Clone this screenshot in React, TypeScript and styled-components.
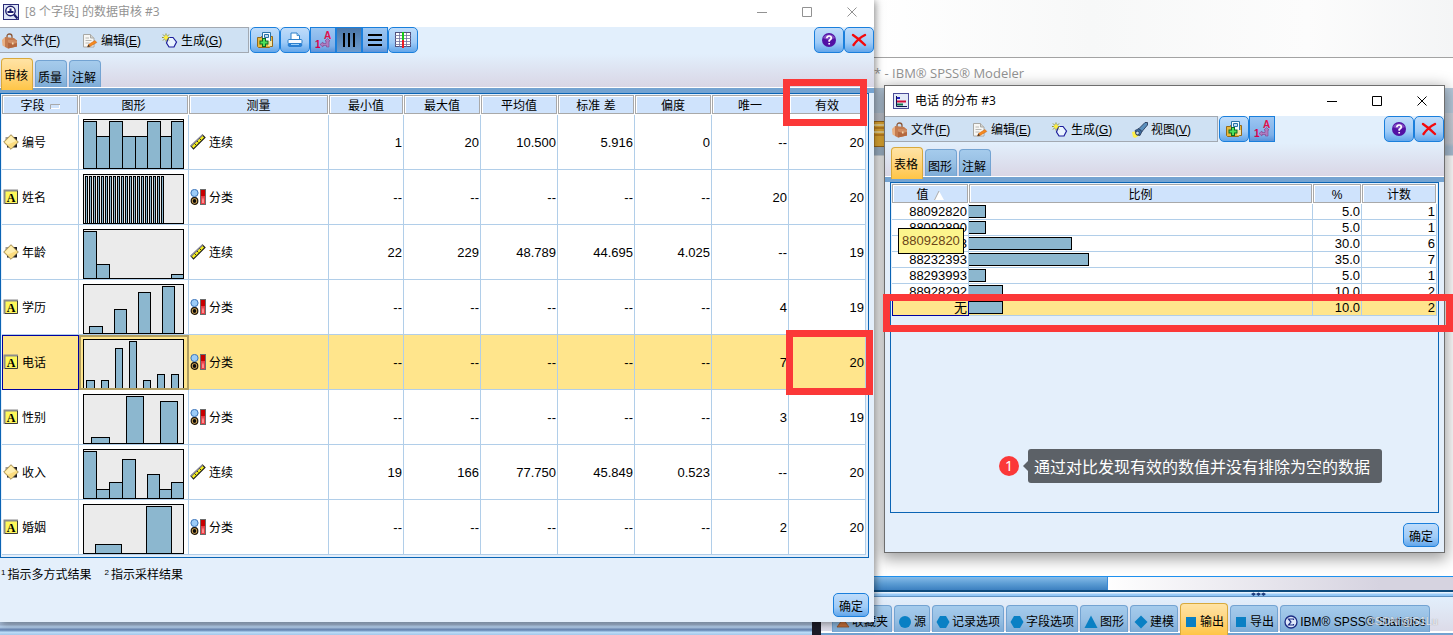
import React from "react";
import styled, { createGlobalStyle, css } from "styled-components";

const Global = createGlobalStyle`
  *, *::before, *::after { box-sizing: border-box; }
  body { margin: 0; background: #fff; }
  button { font: inherit; color: inherit; padding: 0; margin: 0; cursor: default; }
  body, table {
    font-family: "Liberation Sans", "Noto Sans CJK SC", sans-serif;
    font-size: 12px;
    line-height: 16px;
    color: #000;
  }
`;

const SPLIT = "874fr 579fr";
const BAR = "#8cb7cf";

/* ---------- desktop and the application behind ---------- */

const Desktop = styled.main`
  position: relative;
  display: grid;
  grid-template-columns: ${SPLIT};
  align-items: start;
  min-height: 100vh;
  overflow: hidden;
`;
const Backdrop = styled.div`
  position: absolute;
  inset: 0;
  display: flex;
  flex-direction: column;
`;
const Above = styled.div`
  height: 58px;
  background: linear-gradient(90deg, #fff 60%, #f7f8f8 75%, #fcfcfc 90%, #f4f5f6);
  border-bottom: 1px solid #a3a3a3;
`;
const AppTitle = styled.div`
  display: grid;
  grid-template-columns: ${SPLIT};
  height: 30px;
  background: #fff;
  font: 13px/30px "Open Sans", "Noto Sans", sans-serif;
  color: #929292;
`;
const AppMenu = styled.div`
  height: 25px;
  background: #b8cbdd;
`;
const AppTools = styled.div`
  display: grid;
  grid-template-columns: ${SPLIT};
  align-items: center;
  height: 43px;
  background: linear-gradient(#ccd2dc, #c4c9d3 30px, #a9bfd4 34px);
  border-bottom: 1px solid #d5dee6;
`;
const AppCanvas = styled.div`
  flex: 1;
  background: #fff;
`;
const AppScroll = styled.div`
  display: grid;
  grid-template-columns: 1108fr 345fr;
  height: 16px;
  border-top: 1px solid #1e90ee;
  border-bottom: 2px solid #0c4a7c;
  background: linear-gradient(90deg, #fff 76%, #d6d3e0 95%);
`;
const AppThumb = styled.div`
  background: linear-gradient(#86bbe8, #5c9dd4 50%, #3c80c0);
  border-right: 1px solid #3a8ad8;
`;
const Splitter = styled.div`
  display: grid;
  grid-template-columns: 1251fr 202fr;
  height: 5px;
  background: linear-gradient(#e6f2fe 1px, #9ccdf8 2px, #8fc4f4 4px, #5d92c4 4px);
`;
const BottomRow = styled.div`
  display: grid;
  grid-template-columns: 812fr 9px 632fr;
  height: 38px;
`;
const BlurredBar = styled.div`
  background: linear-gradient(#b4cbe6 24px, #a3b7d3 28px, #b8d2ee 29px, #a9c5e4 31px, #6c86b2 32px, #7ba0cb 34px, #bfe0fa 35px, #a4c7ea);
`;
const DarkBlock = styled.div`
  background: #1d1c28;
`;
const Palette = styled.nav`
  display: flex;
  align-items: flex-end;
  gap: 2px;
  height: 38px;
  padding: 0 0 3px 11px;
  background: linear-gradient(#e2effc, #dcdbe8 34px, #fff 34px, #fff 36px, #72a2d0 36px);
`;

const tabFill = css<{ $active?: boolean }>`
  border: 1px solid ${(p) => (p.$active ? "#d8a93c" : "#73a3d2")};
  border-bottom: 0;
  border-radius: 4px 4px 0 0;
  background: ${(p) =>
    p.$active ? "linear-gradient(#ffe3a4, #ffd887 40%, #ffc546)" : "linear-gradient(#a5cbec, #98c0e4 50%, #7dabd6)"};
`;
const PaletteTab = styled.button<{ $active?: boolean }>`
  display: flex;
  align-items: center;
  gap: 2px;
  flex: none;
  height: ${(p) => (p.$active ? 32 : 27)}px;
  margin-bottom: ${(p) => (p.$active ? -3 : 0)}px;
  padding: ${(p) => (p.$active ? 4 : 6)}px 3px 0;
  white-space: nowrap;
  ${tabFill}
`;
const Watermark = styled.span`
  position: absolute;
  right: 15px;
  bottom: 6px;
  font-size: 11px;
  color: #f4f4f8;
  text-shadow: 0 0 1px #666;
  opacity: 0.75;
`;

/* ---------- windows ---------- */

const Win = styled.section<{ $child?: boolean }>`
  position: relative;
  background: #e4effb;
  ${(p) =>
    p.$child
      ? "margin: 85px 8px 0 10px; border: 1px solid #6e6e6e; box-shadow: 0 4px 14px 2px rgba(0,0,0,.38);"
      : "z-index: 1; box-shadow: 1px 1px 8px rgba(0,0,0,.5);"}
`;
const TitleBar = styled.header<{ $child?: boolean }>`
  display: flex;
  align-items: center;
  gap: 6px;
  height: ${(p) => (p.$child ? 30 : 27)}px;
  padding-left: ${(p) => (p.$child ? 8 : 3)}px;
  padding-bottom: ${(p) => (p.$child ? 0 : 4)}px;
  background: #fff;
  font-family: "Open Sans", "Noto Sans CJK SC", sans-serif;
  color: ${(p) => (p.$child ? "#000" : "#929292")};
`;
const Title = styled.h1`
  flex: 1;
  margin: 0;
  font-size: 12px;
  font-weight: 400;
`;
const Caption = styled.div`
  display: flex;
`;
const CaptionButton = styled.button`
  display: grid;
  place-items: center;
  width: 45px;
  height: 22px;
  border: 0;
  background: none;
`;
const Chrome = styled.div`
  display: flex;
  flex-direction: column;
  justify-content: space-between;
  height: 60px;
  background: linear-gradient(#e2effc, #e2effc 45%, #d9d6e5);
`;
const ToolRow = styled.div`
  display: flex;
  height: 26px;
`;
const MenuBar = styled.nav<{ $child?: boolean }>`
  display: flex;
  width: ${(p) => (p.$child ? 333 : 249)}px;
  margin-right: 1px;
  padding-left: ${(p) => (p.$child ? 7 : 2)}px;
  background: #cfe1f3;
  border: solid #a2a9b2;
  border-width: 1px 1px 1px 0;
`;
const MenuButton = styled.button`
  display: flex;
  align-items: center;
  gap: 3px;
  width: 80px;
  padding-top: 2px;
  border: 0;
  background: none;
  white-space: nowrap;
`;
const Push = styled.span`
  flex: 1;
`;
const ToolButton = styled.button<{ $kind?: "flat" | "down" }>`
  display: grid;
  place-items: center;
  width: ${(p) => (p.$kind ? 26 : 30)}px;
  height: 26px;
  border: 1px solid #1a7fdc;
  border-radius: ${(p) => (p.$kind ? 0 : 5)}px;
  background: ${(p) =>
    p.$kind === "down"
      ? "linear-gradient(#4a76a8, #6c9bcd)"
      : p.$kind === "flat"
      ? "linear-gradient(#9cc6f2, #7fb0e8 75%, #5a92d8)"
      : "linear-gradient(#bfdcfa, #9fcbf7 60%, #62a6ea)"};
`;
const TabRow = styled.div<{ $child?: boolean }>`
  position: relative;
  z-index: 1;
  display: flex;
  align-items: flex-end;
  gap: 2px;
  padding-left: ${(p) => (p.$child ? 6 : 1)}px;
`;
const Tab = styled.button<{ $active?: boolean }>`
  width: 32px;
  height: ${(p) => (p.$active ? 32 : 27)}px;
  margin-bottom: ${(p) => (p.$active ? -3 : 0)}px;
  padding: ${(p) => (p.$active ? 2 : 8)}px 2px 0 0;
  ${tabFill}
`;
const Band = styled.div`
  height: 6px;
  border-top: 1px solid #fff;
  background: #74a3d1;
`;
const Frame = styled.div<{ $child?: boolean }>`
  position: relative;
  margin: 0 5px 0 ${(p) => (p.$child ? 5 : 0)}px;
  min-height: ${(p) => (p.$child ? 331 : 465)}px;
  padding: 1px;
  border: 1px solid #0a64b4;
`;
const Notes = styled.p`
  display: flex;
  gap: 13px;
  margin: 0;
  padding: 9px 0 10px 1px;
  sup {
    font-size: 8px;
    line-height: 8px;
    vertical-align: 4px;
    margin-right: 2px;
  }
`;
const Actions = styled.div<{ $child?: boolean }>`
  display: flex;
  justify-content: flex-end;
  padding: ${(p) => (p.$child ? 10 : 0)}px 5px 5px;
`;
const OkButton = styled.button`
  width: 36px;
  height: 24px;
  padding-top: 3px;
  border: 1px solid #1a7fdc;
  border-radius: 5px;
  background: linear-gradient(#bfdcfa, #9fcbf7 60%, #62a6ea);
`;

/* ---------- tables ---------- */

const Table = styled.table<{ $inset?: boolean }>`
  width: ${(p) => (p.$inset ? "calc(100% - 1px)" : "100%")};
  table-layout: fixed;
  border-collapse: separate;
  border-spacing: 0;
`;
const Th = styled.th`
  height: 20px;
  padding: 0 1px 1px 0;
  font-weight: 400;
  background: #fff;
`;
const HeadBox = styled.div`
  display: flex;
  align-items: center;
  justify-content: center;
  gap: 5px;
  height: 19px;
  padding-top: 3px;
  border: 1px solid #a9a9a9;
  box-shadow: inset 1px 1px #fff;
  background: #cfe3fc;
`;
const Row = styled.tr<{ $selected?: boolean; $height: number }>`
  height: ${(p) => p.$height}px;
  background: ${(p) => (p.$selected ? "#ffe58c" : "#fff")};
`;
const Td = styled.td<{ $mark?: "focus" | "graph" }>`
  padding: 0 1px;
  border-right: 1px solid #b1cee9;
  border-bottom: 1px solid #b1cee9;
  text-align: right;
  font-size: 13px;
  line-height: 15px;
  ${(p) => p.$mark === "focus" && "outline: 1px solid #0000a0; outline-offset: -1px;"}
  ${(p) => p.$mark === "graph" && "outline: 2px solid #b09e62; outline-offset: -2px;"}
`;
const Label = styled.div`
  display: flex;
  align-items: center;
  gap: 3px;
  font-size: 12px;
  line-height: 16px;
  span { padding-top: 2px; }
`;
const GraphBox = styled.div`
  display: flex;
  padding: 4px 0 0 3px;
`;
const BarCell = styled(Td)`
  padding: 0;
`;
const Bar = styled.div`
  height: 13px;
  border: 1px solid #000;
  border-left: 0;
  background: ${BAR};
`;

/* ---------- annotations ---------- */

const RedBox = styled.div<{ $top: number; $right: number; $width: string; $height: number }>`
  position: absolute;
  z-index: 3;
  top: ${(p) => p.$top}px;
  right: ${(p) => p.$right}px;
  width: ${(p) => p.$width};
  height: ${(p) => p.$height}px;
  border: 7px solid #fb3838;
  pointer-events: none;
`;
const Tip = styled.div`
  position: absolute;
  z-index: 2;
  top: 142px;
  left: 13px;
  padding: 4px 3px;
  border: 1px solid #000;
  background: #fcf48c;
  color: #6a4418;
  font-size: 13px;
`;
const Callout = styled.div`
  position: absolute;
  top: 363px;
  right: 62px;
  display: flex;
  align-items: center;
  gap: 9px;
  white-space: nowrap;
`;
const Badge = styled.span`
  width: 20px;
  height: 20px;
  border-radius: 50%;
  background: #fb3838;
  color: #fff;
  font: 14px/20px "Noto Sans", sans-serif;
  text-align: center;
`;
const Bubble = styled.span`
  position: relative;
  padding: 0 12px 0 6px;
  border-radius: 3px;
  background: #5c6167;
  color: #fff;
  font: 16px/34px "Noto Sans CJK SC", sans-serif;
  &::before {
    content: "";
    position: absolute;
    left: -5px;
    top: 12px;
    border: 5px solid transparent;
    border-left: 0;
    border-right-color: #5c6167;
  }
`;

/* ---------- icons ---------- */

const Svg = ({ w = 16, h = 16, children }: { w?: number; h?: number; children: React.ReactNode }) => (
  <svg width={w} height={h} viewBox={`0 0 ${w} ${h}`} aria-hidden="true">
    {children}
  </svg>
);

const AuditIcon = () => (
  <Svg>
    <rect x=".5" y=".5" width="15" height="15" fill="#dfe6f6" stroke="#2c2c78" />
    <circle cx="7.500" cy="7" r="4.700" fill="#fff" stroke="#1c1c6c" strokeWidth="1.400" />
    <path d="M11 10.500l3.500 4" stroke="#1c1c6c" strokeWidth="2.200" />
    <path d="M4.500 9V7h2V4.500h2V7h2v2z" fill="#1c1c6c" />
  </Svg>
);
const DistIcon = () => (
  <Svg>
    <rect x=".5" y=".5" width="15" height="15" fill="#e3eaf8" stroke="#4c4c98" />
    <path d="M3.500 3v10.500H14" stroke="#101050" fill="none" />
    <path d="M4 5h3" stroke="#2424c0" strokeWidth="2" />
    <path d="M4 8.500h9" stroke="#d40c38" strokeWidth="2" />
    <path d="M4 11.500h6" stroke="#10704c" strokeWidth="2" />
  </Svg>
);
const BagIcon = () => (
  <Svg>
    <path d="M5 6V3.500Q5 1 7.500 1T10 3.500V5" fill="none" stroke="#8c5a3c" strokeWidth="1.300" />
    <path d="M0 7l3-3v10l-2.500-1.500z" fill="#e9b184" />
    <path d="M3 4l9 1 3 2.500v6l-9 2-3-1.500z" fill="#c47c50" />
    <path d="M6 6.500l9 1v6l-9 2z" fill="#b4683f" />
    <path d="M6 6.500l9 1v2.500l-4.500 1L6 9.500z" fill="#d08e64" />
    <path d="M10 9.500h1.500v2H10z" fill="#f4d9b0" />
  </Svg>
);
const EditIcon = () => (
  <Svg>
    <path d="M1.500 1.500h7l3.500 3.500v9h-10.500z" fill="#f7f7f5" stroke="#a8a8a4" />
    <path d="M8.500 1.500V5H12" fill="#d4d4d0" stroke="#a8a8a4" />
    <path d="M3.500 5h3.500M3.500 7.500h6M3.500 10h4" stroke="#b8b8b4" />
    <path d="M6.500 11.500L13 7.500l1.800 2-6.800 4-2.500.5z" fill="#f58a1e" stroke="#c45c10" strokeWidth=".5" />
    <path d="M5.500 14l1-2.500 1.500 2z" fill="#333" />
  </Svg>
);
const GenIcon = () => (
  <Svg>
    <path d="M6.500 4.500H11L14.500 9l-2.500 5H7L4.500 10z" fill="#e9f4ff" stroke="#1c1c9c" strokeWidth="1.200" />
    <path d="M0 4.500h8M4 .5v8M1 1.500l6 6M7 1.500l-6 6" stroke="#8a8a1c" strokeWidth=".9" />
    <path d="M4 2L6.500 4.500 4 7 1.500 4.500z" fill="#ffef3c" />
  </Svg>
);
const TorchIcon = () => (
  <Svg>
    <path d="M0 10l5-1 3 4-5 3-2-1z" fill="#fff04a" />
    <path d="M3 8.500l4-2 3 3-2 4-3.500-.5z" fill="#3d6c9c" stroke="#1c2c4c" strokeWidth=".7" />
    <path d="M7 6.500L13 .5h2.500V3L10 9.500z" fill="#5a8fbc" stroke="#1c2c4c" strokeWidth=".8" />
    <circle cx="5.500" cy="11" r="1.800" fill="#c8dcf0" stroke="#1c2c4c" strokeWidth=".7" />
  </Svg>
);
const AddPageIcon = () => (
  <Svg>
    <path d="M.5 5.500h4v-1h11v10h-2l-1 1H1.500l-1-1z" fill="#e6b83e" stroke="#94691c" />
    <path d="M5.500 .5h8v9h-8z" fill="#f5fbff" stroke="#2a72a8" />
    <path d="M7.500 2.500h4v3h-4z" fill="#bfdcf0" stroke="#2a72a8" />
    <path d="M11 9h4v5h-4z" fill="#f4e4a4" />
    <path d="M2.500 10.500h9M7 6v9" stroke="#0d6820" strokeWidth="4" />
    <path d="M3.500 10.500h7M7 7v7" stroke="#4ce05a" strokeWidth="2" />
  </Svg>
);
const PrintIcon = () => (
  <Svg>
    <path d="M4 8V1h6l2.500 2.500V8z" fill="#fff" stroke="#2f80c8" />
    <path d="M10 1v2.500h2.500" fill="#bcdcf6" stroke="#2f80c8" strokeWidth=".8" />
    <rect x="1" y="7.500" width="14" height="4" rx="1" fill="#f6faff" stroke="#2f80c8" />
    <path d="M.8 11.500h14.400v2L14 15H2L.8 13.500z" fill="#2a80d4" />
    <path d="M4 12.500h8" stroke="#9cd0fa" />
  </Svg>
);
const OneAIcon = () => (
  <Svg w={18} h={18}>
    <text x="1" y="17" fontFamily="Liberation Sans" fontWeight="700" fontSize="10" fill="#d8004c">1</text>
    <text x="10" y="8" fontFamily="Liberation Sans" fontWeight="700" fontSize="10" fill="#e0104c">A</text>
    <path d="M6 13.500L9 11v1.500h3V10h-1l2.500-2.500L16 10h-1v6h-2.500v-1.500H9V16z" fill="#b07cc0" stroke="#84408c" strokeWidth=".6" />
  </Svg>
);
const ColsIcon = () => (
  <Svg>
    <path d="M3 1v14M8 1v14M13 1v14" stroke="#000" strokeWidth="2" />
  </Svg>
);
const RowsIcon = () => (
  <Svg>
    <path d="M1 3h14M1 8h14M1 13h14" stroke="#000" strokeWidth="2" />
  </Svg>
);
const GridIcon = () => (
  <Svg w={18} h={18}>
    <rect x="1.500" y="1.500" width="15" height="14" fill="#fff" stroke="#50507c" />
    <path d="M1 4.500h16M1 7.500h16M1 10.500h16M1 13.500h16M5.500 2v14M12.500 2v14" stroke="#70709c" strokeWidth=".8" />
    <rect x="8" y="1" width="2" height="8" fill="#18c818" />
    <rect x="8" y="9" width="2" height="8" fill="#ec1c24" />
  </Svg>
);
const HelpIcon = () => (
  <Svg>
    <circle cx="8" cy="8" r="7" fill="#5210a4" />
    <path d="M2 6a6.500 5.500 0 0 1 12 0q-6 3-12 0z" fill="#9468d0" opacity=".7" />
    <path d="M5.800 6.300Q6 4 8.100 4t2.200 2Q10.300 7.200 8.200 8.500v1.200M8.200 11v1.600" fill="none" stroke="#fff" strokeWidth="1.700" />
  </Svg>
);
const CloseIcon = () => (
  <Svg>
    <path d="M2 3Q8 7 14 13M14 3Q7 6.500 2.500 13" stroke="#f4080c" strokeWidth="2.400" fill="none" strokeLinecap="round" />
  </Svg>
);
const DiamondIcon = () => (
  <Svg>
    <path d="M2.500 3h4v4h-4z" fill="#9c9c9c" />
    <path d="M10 3h4v4h-4zM10 10h4v3.500h-4zM4 10h3v3.500H4z" fill="#1c1c24" />
    <path d="M8 .7L15.300 8 8 15.300.7 8z" fill="#fbdc80" stroke="#a08c54" />
    <path d="M8 2L13 7 5 10.500 2 8z" fill="#fff0b4" />
  </Svg>
);
const LetterIcon = () => (
  <Svg>
    <path d="M1 1h14v14H1z" fill="#fff85a" />
    <path d="M1.500 15V1.500H15" fill="none" stroke="#8c8c8c" strokeWidth="2" />
    <path d="M14.500 2v12.500H2" fill="none" stroke="#3c3c3c" />
    <text x="8.200" y="12.500" textAnchor="middle" fontFamily="Liberation Serif" fontWeight="700" fontSize="12">A</text>
  </Svg>
);
const RulerIcon = () => (
  <Svg>
    <path d="M1 12L12.500 1 15 3.500 3.500 15z" fill="#f4ec1c" stroke="#1c1c1c" strokeWidth="1.100" />
    <path d="M1 12L12.500 1" stroke="#8c8c9c" strokeWidth="1.500" />
    <path d="M4.500 9.500L6 11M7 7l1.500 1.500M9.500 4.500L11 6" stroke="#1c1c1c" strokeWidth=".9" />
  </Svg>
);
const CategoryIcon = () => (
  <Svg>
    <circle cx="4.500" cy="4" r="3.600" fill="#9cccf8" stroke="#3c74b8" />
    <path d="M2.500 8.500h4" stroke="#3c74b8" />
    <circle cx="4.500" cy="12" r="3.300" fill="#e8b860" stroke="#1c1408" strokeWidth="1.200" />
    <circle cx="4.500" cy="12" r="1.900" fill="#0c0c0c" />
    <rect x="10.500" y=".5" width="5" height="15" fill="#e83c44" stroke="#6c6c6c" />
    <path d="M11 1h4v6h-4z" fill="#c80000" />
    <path d="M13 8l1 3v3h-2v-3z" fill="#ff8c8c" />
  </Svg>
);

const captionPaths = {
  最小化: "M0 5.500h10",
  最大化: "M.5.5h9v9h-9z",
  关闭: "M.5.5l9 9M9.500.5l-9 9",
};

const Captions = () => (
  <Caption>
    {Object.entries(captionPaths).map(([name, d]) => (
      <CaptionButton key={name} aria-label={name}>
        <Svg w={10} h={10}>
          <path d={d} fill="none" stroke="currentColor" />
        </Svg>
      </CaptionButton>
    ))}
  </Caption>
);

/* ---------- data ---------- */

type BarShape = [x: number, width: number, top: number];

const graphs: Record<string, BarShape[]> = {
  编号: [[0, 13, 2], [13, 13, 17], [26, 13, 2], [39, 13, 17], [52, 12, 17], [64, 13, 2], [77, 11, 17], [88, 12, 2]],
  姓名: Array.from({ length: 20 }, (_, i): BarShape => [2 + i * 4, 2, 2]),
  年龄: [[0, 13, 2], [13, 13, 35], [88, 12, 45]],
  学历: [[6, 13, 42], [31, 12, 25], [55, 12, 8], [79, 12, 2]],
  电话: [[3, 8, 41], [18, 7, 41], [32, 7, 9], [46, 7, 2], [60, 7, 41], [74, 7, 35], [88, 7, 35]],
  性别: [[8, 18, 43], [43, 17, 2], [77, 17, 7]],
  收入: [[0, 13, 2], [13, 13, 40], [26, 13, 33], [39, 13, 10], [64, 12, 25], [76, 12, 40], [88, 12, 33]],
  婚姻: [[12, 26, 40], [63, 25, 2]],
};

const NA = "--";
const fields: { name: string; numeric?: boolean; values: string[] }[] = [
  { name: "编号", numeric: true, values: ["1", "20", "10.500", "5.916", "0", NA, "20"] },
  { name: "姓名", values: [NA, NA, NA, NA, NA, "20", "20"] },
  { name: "年龄", numeric: true, values: ["22", "229", "48.789", "44.695", "4.025", NA, "19"] },
  { name: "学历", values: [NA, NA, NA, NA, NA, "4", "19"] },
  { name: "电话", values: [NA, NA, NA, NA, NA, "7", "20"] },
  { name: "性别", values: [NA, NA, NA, NA, NA, "3", "19"] },
  { name: "收入", numeric: true, values: ["19", "166", "77.750", "45.849", "0.523", NA, "20"] },
  { name: "婚姻", values: [NA, NA, NA, NA, NA, "2", "20"] },
];
const auditHeads = ["字段", "图形", "测量", "最小值", "最大值", "平均值", "标准 差", "偏度", "唯一", "有效"];
const auditWidths = [77, 110, 0, 75, 77, 77, 77, 77, 77, 77];

const phones: [string, number, number][] = [
  ["88092820", 5, 1],
  ["88092890", 5, 1],
  ["88092893", 30, 6],
  ["88232393", 35, 7],
  ["88293993", 5, 1],
  ["88928292", 10, 2],
  ["无", 10, 2],
];

const menus = [
  { text: "文件", key: "F", icon: <BagIcon /> },
  { text: "编辑", key: "E", icon: <EditIcon /> },
  { text: "生成", key: "G", icon: <GenIcon /> },
  { text: "视图", key: "V", icon: <TorchIcon /> },
];

const B = "#0a80c4";
const shapes: Record<string, React.ReactNode> = {
  fav: <path d="M1 12l3-4 3-5 3 5 3 4z" fill="#c8703a" stroke="#8c4c24" strokeWidth=".8" />,
  circle: <circle cx="7" cy="7" r="6" fill={B} />,
  octagon: <path d="M4 1h6l3.500 6L10 13H4L.5 7z" fill={B} />,
  triangle: <path d="M7 .5L13.500 13H.5z" fill={B} />,
  diamond: <path d="M7 .5L13.500 7 7 13.500.5 7z" fill={B} />,
  square: <path d="M2 2h10v10H2z" fill={B} />,
  sigma: (
    <>
      <circle cx="7" cy="7" r="6" fill="#dfe8fa" stroke="#1c2c84" strokeWidth="1.300" />
      <path d="M9.500 5V4h-5L7 7l-2.500 3h5V9" fill="none" stroke="#1c2c84" strokeWidth="1.200" />
    </>
  ),
};
const paletteTabs = [
  ["收藏夹", "fav"],
  ["源", "circle"],
  ["记录选项", "octagon"],
  ["字段选项", "octagon"],
  ["图形", "triangle"],
  ["建模", "diamond"],
  ["输出", "square"],
  ["导出", "square"],
  ["IBM® SPSS® Statistics", "sigma"],
];

/* ---------- parts ---------- */

const Graph = ({ name }: { name: string }) => (
  <Svg w={101} h={50}>
    <rect x=".5" y=".5" width="100" height="49" fill="#ebebeb" stroke="#000" />
    {graphs[name].map(([x, width, top]) => (
      <rect key={x} x={x + 0.5} y={top + 0.5} width={width} height={49 - top} fill={BAR} stroke="#000" />
    ))}
  </Svg>
);

const Menus = ({ count, child }: { count: number; child?: boolean }) => (
  <MenuBar $child={child}>
    {menus.slice(0, count).map((m) => (
      <MenuButton key={m.key}>
        {m.icon}
        <span>
          {m.text}(<u>{m.key}</u>)
        </span>
      </MenuButton>
    ))}
  </MenuBar>
);

const EndTools = () => (
  <>
    <Push />
    <ToolButton aria-label="帮助"><HelpIcon /></ToolButton>
    <ToolButton aria-label="关闭窗口"><CloseIcon /></ToolButton>
  </>
);

const Tabs = ({ names, child }: { names: string[]; child?: boolean }) => (
  <TabRow $child={child} role="tablist">
    {names.map((n, i) => (
      <Tab key={n} $active={i === 0} role="tab" aria-selected={i === 0}>
        {n}
      </Tab>
    ))}
  </TabRow>
);

const AuditWindow = () => (
  <Win>
    <TitleBar>
      <AuditIcon />
      <Title>[8 个字段] 的数据审核 #3</Title>
      <Captions />
    </TitleBar>
    <Chrome>
      <ToolRow>
        <Menus count={3} />
        <ToolButton aria-label="添加到工程"><AddPageIcon /></ToolButton>
        <ToolButton aria-label="打印"><PrintIcon /></ToolButton>
        <ToolButton $kind="flat" aria-label="显示标签"><OneAIcon /></ToolButton>
        <ToolButton $kind="down" aria-label="按列"><ColsIcon /></ToolButton>
        <ToolButton $kind="flat" aria-label="按行"><RowsIcon /></ToolButton>
        <ToolButton aria-label="表格"><GridIcon /></ToolButton>
        <EndTools />
      </ToolRow>
      <Tabs names={["审核", "质量", "注解"]} />
    </Chrome>
    <Band />
    <Frame>
      <Table $inset>
        <colgroup>
          {auditWidths.map((w, i) => (
            <col key={i} width={w || undefined} />
          ))}
        </colgroup>
        <thead>
          <tr>
            {auditHeads.map((h, i) => (
              <Th key={h} scope="col">
                <HeadBox>
                  {h}
                  {i === 0 && (
                    <Svg w={10} h={5}>
                      <path d="M.5 5V.5H10" stroke="#a9a9a9" fill="none" />
                      <path d="M1 4.500h8.500V1" stroke="#fff" fill="none" />
                    </Svg>
                  )}
                </HeadBox>
              </Th>
            ))}
          </tr>
        </thead>
        <tbody>
          {fields.map((f) => {
            const selected = f.name === "电话";
            return (
              <Row key={f.name} $height={55} $selected={selected}>
                <Td $mark={selected ? "focus" : undefined}>
                  <Label>
                    {f.numeric ? <DiamondIcon /> : <LetterIcon />}
                    <span>{f.name}</span>
                  </Label>
                </Td>
                <Td $mark={selected ? "graph" : undefined}>
                  <GraphBox>
                    <Graph name={f.name} />
                  </GraphBox>
                </Td>
                <Td>
                  <Label>
                    {f.numeric ? <RulerIcon /> : <CategoryIcon />}
                    <span>{f.numeric ? "连续" : "分类"}</span>
                  </Label>
                </Td>
                {f.values.map((v, i) => (
                  <Td key={i}>{v}</Td>
                ))}
              </Row>
            );
          })}
        </tbody>
      </Table>
    </Frame>
    <Notes>
      <span><sup>1</sup>指示多方式结果</span>
      <span><sup>2</sup>指示采样结果</span>
    </Notes>
    <Actions>
      <OkButton>确定</OkButton>
    </Actions>
    <RedBox $top={79} $right={7} $width="84px" $height={47} />
    <RedBox $top={330} $right={1} $width="87px" $height={65} />
  </Win>
);

const DistributionWindow = () => (
  <Win $child>
    <TitleBar $child>
      <DistIcon />
      <Title>电话 的分布 #3</Title>
      <Captions />
    </TitleBar>
    <Chrome>
      <ToolRow>
        <Menus count={4} child />
        <ToolButton aria-label="添加到工程"><AddPageIcon /></ToolButton>
        <ToolButton $kind="flat" aria-label="显示标签"><OneAIcon /></ToolButton>
        <EndTools />
      </ToolRow>
      <Tabs names={["表格", "图形", "注解"]} child />
    </Chrome>
    <Band />
    <Frame $child>
      <Table>
        <colgroup>
          <col width={77} />
          <col />
          <col width={49} />
          <col width={75} />
        </colgroup>
        <thead>
          <tr>
            <Th scope="col">
              <HeadBox>
                值
                <Svg w={10} h={9}>
                  <path d="M5 0l5 9H0z" fill="#fff" />
                  <path d="M5 0L.5 9" stroke="#a9a9a9" />
                </Svg>
              </HeadBox>
            </Th>
            {["比例", "%", "计数"].map((h) => (
              <Th key={h} scope="col"><HeadBox>{h}</HeadBox></Th>
            ))}
          </tr>
        </thead>
        <tbody>
          {phones.map(([value, share, count]) => (
            <Row key={value} $height={16} $selected={value === "无"}>
              <Td $mark={value === "无" ? "focus" : undefined}>{value}</Td>
              <BarCell>
                <Bar style={{ width: `${share}%` }} />
              </BarCell>
              <Td>{share.toFixed(1)}</Td>
              <Td>{count}</Td>
            </Row>
          ))}
        </tbody>
      </Table>
    </Frame>
    <Actions $child>
      <OkButton>确定</OkButton>
    </Actions>
    <Tip role="tooltip">88092820</Tip>
    <Callout>
      <Badge>1</Badge>
      <Bubble>通过对比发现有效的数值并没有排除为空的数据</Bubble>
    </Callout>
    <RedBox $top={208} $right={-9} $width="calc(100% + 11px)" $height={38} />
  </Win>
);

const ModelerBackdrop = () => (
  <Backdrop>
    <Above />
    <AppTitle>
      <span />
      <span>* - IBM® SPSS® Modeler</span>
    </AppTitle>
    <AppMenu />
    <AppTools>
      <span />
      <Svg w={14} h={28}>
        <path d="M0 1.500h14v25H0z" fill="#f4b838" stroke="#a8701c" />
        <path d="M0 8h14M0 15h14" stroke="#c8801c" strokeWidth="1.500" />
        <path d="M0 5h14M0 12h14" stroke="#fff0b8" strokeWidth="1.500" />
      </Svg>
    </AppTools>
    <AppCanvas />
    <AppScroll>
      <AppThumb />
    </AppScroll>
    <Splitter>
      <span />
      <Svg w={15} h={5}>
        <path d="M0 2l2.500-1.500L5 2 2.500 4zM5 2L7.500.5 10 2 7.500 4zM10 2l2.500-1.500L15 2l-2.500 2z" fill="#1c3c7c" />
      </Svg>
    </Splitter>
    <BottomRow>
      <BlurredBar />
      <DarkBlock />
      <Palette>
        {paletteTabs.map(([name, shape]) => (
          <PaletteTab key={name} $active={name === "输出"}>
            <Svg w={14} h={14}>{shapes[shape]}</Svg>
            {name}
          </PaletteTab>
        ))}
      </Palette>
    </BottomRow>
    <Watermark>CSDN @S1Lu</Watermark>
  </Backdrop>
);

export default function App() {
  return (
    <>
      <Global />
      <Desktop>
        <ModelerBackdrop />
        <AuditWindow />
        <DistributionWindow />
      </Desktop>
    </>
  );
}
